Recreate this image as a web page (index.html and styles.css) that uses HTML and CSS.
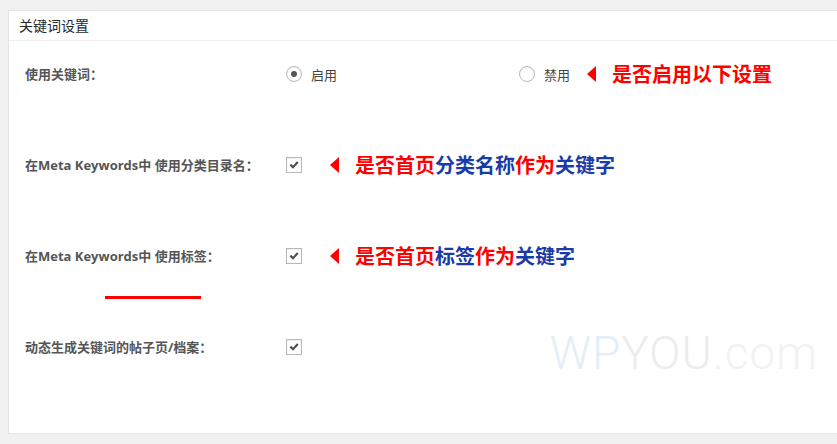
FILE: index.html
```html
<!DOCTYPE html>
<html lang="zh-CN">
<head>
    <meta charset="UTF-8">
    <title>关键词设置</title>
    <link rel="stylesheet" href="styles.css">
</head>
<body>
    <div class="postbox">
        <h3 class="hndle">关键词设置</h3>

        <div class="inside">
            <div class="row">
                <div class="row-label">使用关键词：</div>
                <div class="row-field">
                    <label class="option">
                        <span class="radio checked"></span>启用
                    </label>
                    <label class="option">
                        <span class="radio"></span>禁用
                    </label>
                    <span class="arrow"></span>
                    <span class="note"><em class="red">是否启用以下设置</em></span>
                </div>
            </div>

            <div class="row">
                <div class="row-label">在Meta Keywords中 使用分类目录名：</div>
                <div class="row-field">
                    <span class="checkbox"><svg viewBox="0 0 16 16"><path d="M3 8.5l1.8-1.8 2.1 2.1 4.5-5.1 1.8 1.7-6.3 7z"/></svg></span>
                    <span class="arrow wide"></span>
                    <span class="note"><em class="red">是否首页</em><em class="blue">分类名称</em><em class="red">作为</em><em class="blue">关键字</em></span>
                </div>
            </div>

            <div class="row">
                <div class="row-label">在Meta Keywords中 使用标签：</div>
                <div class="row-field">
                    <span class="checkbox"><svg viewBox="0 0 16 16"><path d="M3 8.5l1.8-1.8 2.1 2.1 4.5-5.1 1.8 1.7-6.3 7z"/></svg></span>
                    <span class="arrow wide"></span>
                    <span class="note"><em class="red">是否首页</em><em class="blue">标签</em><em class="red">作为</em><em class="blue">关键字</em></span>
                </div>
                <span class="underline"></span>
            </div>

            <div class="row">
                <div class="row-label">动态生成关键词的帖子页/档案：</div>
                <div class="row-field">
                    <span class="checkbox"><svg viewBox="0 0 16 16"><path d="M3 8.5l1.8-1.8 2.1 2.1 4.5-5.1 1.8 1.7-6.3 7z"/></svg></span>
                </div>
            </div>

            <div class="watermark"><span class="wm-wp">WP</span><span class="wm-you">YOU</span><span class="wm-com">.com</span></div>
        </div>
    </div>
</body>
</html>
```

FILE: styles.css
```css
/* Base */
* {
    margin: 0;
    padding: 0;
    box-sizing: border-box;
}

html, body {
    overflow: hidden;
}

body {
    background: #f1f1f1;
    font-family: "Open Sans", "Noto Sans CJK SC", sans-serif;
    color: #444;
}

/* Panel */
.postbox {
    margin: 10px -30px 0 8px;
    background: #fff;
    border: 1px solid #e5e5e5;
    box-shadow: 0 1px 1px rgba(0,0,0,0.04);
}

.hndle {
    height: 30px;
    line-height: 30px;
    padding-left: 10px;
    font-size: 14px;
    font-weight: normal;
    color: #23282d;
    border-bottom: 1px solid #eee;
}

.inside {
    position: relative;
    padding-bottom: 28px;
}

/* Rows */
.row {
    position: relative;
    display: flex;
    align-items: flex-start;
    height: 91px;
    padding-top: 25px;
}

.row-label {
    width: 277px;
    padding-left: 16px;
    line-height: 16px;
    font-size: 13px;
    font-weight: 700;
    color: #555;
}

.row-field {
    display: flex;
    align-items: center;
    height: 16px;
    font-size: 13px;
}

.option {
    display: flex;
    align-items: center;
    width: 233px;
    color: #444;
}

.option:last-of-type {
    width: auto;
}

.radio {
    width: 16px;
    height: 16px;
    margin-right: 9px;
    border: 1px solid #b4b9be;
    border-radius: 50%;
    background: #fff;
    box-shadow: inset 0 1px 2px rgba(0,0,0,0.07);
    display: flex;
    align-items: center;
    justify-content: center;
}

.radio.checked::before {
    content: "";
    width: 6px;
    height: 6px;
    border-radius: 50%;
    background: #555;
}

.checkbox {
    width: 16px;
    height: 16px;
    border: 1px solid #b4b9be;
    background: #fff;
    box-shadow: inset 0 1px 2px rgba(0,0,0,0.07);
    display: flex;
    align-items: center;
    justify-content: center;
}

.checkbox svg {
    width: 14px;
    height: 14px;
    fill: #4d4d4d;
}

/* Annotations */
.arrow {
    width: 0;
    height: 0;
    margin-left: 17px;
    border-top: 8px solid transparent;
    border-bottom: 8px solid transparent;
    border-right: 9px solid #f00;
}

.arrow.wide {
    margin-left: 28px;
}

.note {
    margin-left: 16px;
    font-family: "Noto Sans CJK SC", sans-serif;
    font-size: 20px;
    font-weight: 700;
    line-height: 20px;
}

.note em {
    font-style: normal;
}

.red {
    color: #f00;
}

.blue {
    color: #1b3ba8;
}

.underline {
    position: absolute;
    left: 96px;
    top: 73px;
    width: 96px;
    height: 3px;
    background: #f00;
}

/* Watermark */
.watermark {
    position: absolute;
    right: 48px;
    bottom: 57px;
    font-family: Roboto, "Liberation Sans", sans-serif;
    font-weight: 300;
    font-size: 46px;
    line-height: 46px;
    letter-spacing: 1px;
}

.wm-wp {
    color: #e3eef8;
}

.wm-you {
    color: #ececec;
}

.wm-com {
    color: #f2f2f2;
}
```
